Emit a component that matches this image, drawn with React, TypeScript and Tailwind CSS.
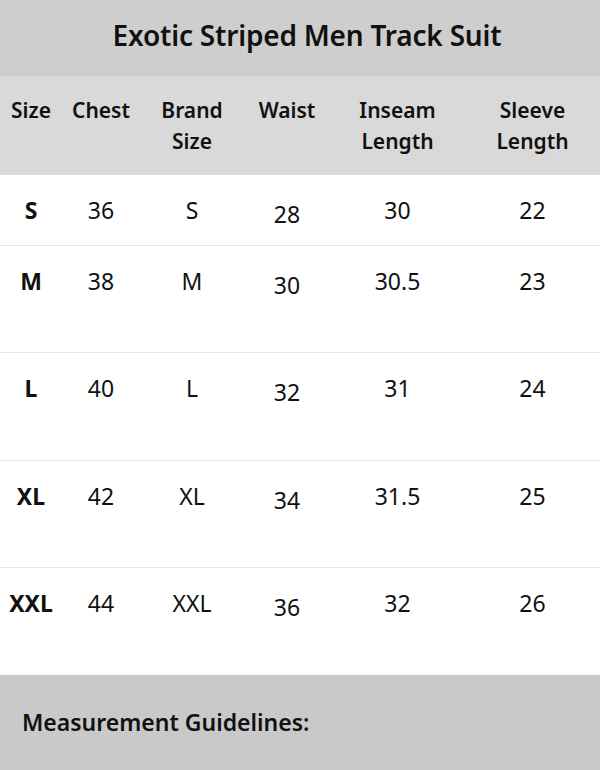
const headers: string[][] = [
  ['Size'],
  ['Chest'],
  ['Brand', 'Size'],
  ['Waist'],
  ['Inseam', 'Length'],
  ['Sleeve', 'Length'],
];

const rows = [
  { size: 'S', chest: '36', brand: 'S', waist: '28', inseam: '30', sleeve: '22', h: 'h-[71px]' },
  { size: 'M', chest: '38', brand: 'M', waist: '30', inseam: '30.5', sleeve: '23', h: 'h-[107px]' },
  { size: 'L', chest: '40', brand: 'L', waist: '32', inseam: '31', sleeve: '24', h: 'h-[108px]' },
  { size: 'XL', chest: '42', brand: 'XL', waist: '34', inseam: '31.5', sleeve: '25', h: 'h-[107px]' },
  { size: 'XXL', chest: '44', brand: 'XXL', waist: '36', inseam: '32', sleeve: '26', h: 'h-[107px]' },
];

const cols = 'grid grid-cols-[62px_78px_104px_86px_135px_135px]';

export default function App() {
  return (
    <main className="w-[600px] h-[770px] overflow-hidden bg-white text-[#111] font-['Noto_Sans',sans-serif]">
      <div className="h-[76px] bg-[#cecece] flex items-center justify-center pb-[6px]">
        <h1 className="text-[28px] font-semibold tracking-[-0.2px] pl-[14px]">Exotic Striped Men Track Suit</h1>
      </div>

      <div className={`${cols} h-[99px] bg-[#d9d9d9] pt-[19px] items-start`}>
        {headers.map((lines, i) => (
          <div key={i} className="flex flex-col items-center text-[21px] font-semibold leading-[31px]">
            {lines.map((l) => (
              <span key={l}>{l}</span>
            ))}
          </div>
        ))}
      </div>

      {rows.map((r, i) => (
        <div
          key={r.size}
          className={`${cols} ${r.h} ${i < rows.length - 1 ? 'border-b border-[#e6e6e6]' : ''} items-start text-[23px] pt-[18px]`}
        >
          <span className="text-center font-bold">{r.size}</span>
          <span className="text-center">{r.chest}</span>
          <span className="text-center">{r.brand}</span>
          <span className="text-center pt-[4px]">{r.waist}</span>
          <span className="text-center">{r.inseam}</span>
          <span className="text-center">{r.sleeve}</span>
        </div>
      ))}

      <div className="h-[95px] bg-[#c9c9c9] flex items-center pl-[22px]">
        <h2 className="text-[23px] font-semibold">Measurement Guidelines:</h2>
      </div>
    </main>
  );
}
